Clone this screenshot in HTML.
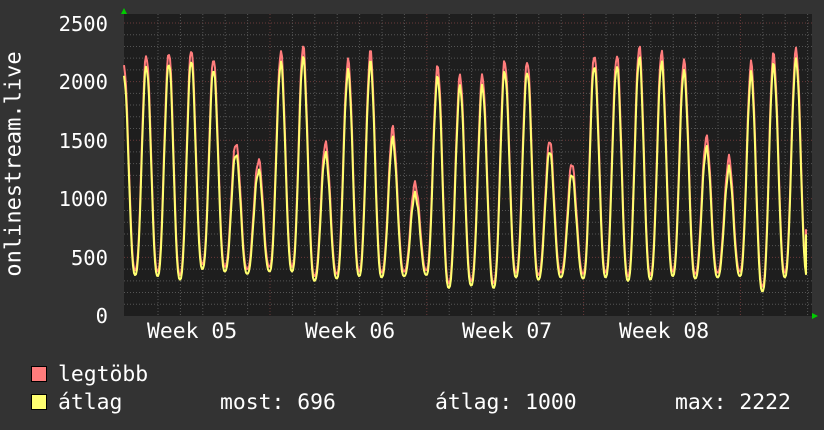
<!DOCTYPE html>
<html><head><meta charset="utf-8"><style>
html,body{margin:0;padding:0;background:#333;}
body{width:824px;height:430px;overflow:hidden;position:relative;font-family:"DejaVu Sans Mono","Liberation Mono",monospace;color:#fff;}
.t{position:absolute;font-size:21.4px;white-space:pre;line-height:1;}
.y{font-size:20.5px;}
.sq{position:absolute;width:14px;height:14px;border:1px solid #000;}
</style></head><body>
<svg id="g" width="824" height="430" style="position:absolute;left:0;top:0">
<rect x="124" y="14" width="688" height="302" fill="#1e1e1e"/>
<g id="grid"></g>
<path id="red" fill="none" stroke="#ff7c7c" stroke-width="2" stroke-linejoin="round"/>
<path id="yel" fill="none" stroke="#ffff70" stroke-width="2" stroke-linejoin="round"/>
<polygon points="121,14 127,14 124,8" fill="#00cc00"/>
<polygon points="812,313 812,319 818,316" fill="#00cc00"/>
<text x="14" y="164" transform="rotate(-90 14 164)" fill="#fff" font-size="22" text-anchor="middle" dominant-baseline="central" font-family="DejaVu Sans Mono,Liberation Mono,monospace">onlinestream.live</text>
</svg>
<div class="t y" style="right:716px;top:14px">2500</div>
<div class="t y" style="right:716px;top:72px">2000</div>
<div class="t y" style="right:716px;top:131px">1500</div>
<div class="t y" style="right:716px;top:189px">1000</div>
<div class="t y" style="right:716px;top:248px">500</div>
<div class="t y" style="right:716px;top:306px">0</div>
<div class="t" style="left:147px;top:321px">Week 05</div>
<div class="t" style="left:305px;top:321px">Week 06</div>
<div class="t" style="left:462px;top:321px">Week 07</div>
<div class="t" style="left:619px;top:321px">Week 08</div>
<div class="sq" style="left:31px;top:366px;background:#ff7c7c"></div>
<div class="sq" style="left:31px;top:394px;background:#ffff70"></div>
<div class="t" style="left:58px;top:364px">legtöbb</div>
<div class="t" style="left:58px;top:392px">átlag</div>
<div class="t" style="left:220px;top:392px">most: 696</div>
<div class="t" style="left:435px;top:392px">átlag: 1000</div>
<div class="t" style="left:675px;top:392px">max: 2222</div>
<script>
var L=124,R=812,T=14,B=316,k=0.11720;
function Y(v){return B-v*k;}
var g='';
for(var v=100;v<=2500;v+=100){var y=Y(v);var maj=(v%500==0);
g+='<line x1="'+L+'" x2="'+R+'" y1="'+y+'" y2="'+y+'" stroke="'+(maj?'#6a3a3a':'#555')+'" stroke-dasharray="1,2" stroke-width="1"/>';}
for(var d=0;d<31;d++){var x=158+22.4*d;if(x>R)break;var maj=((d-5)%7==0);
g+='<line x1="'+x+'" x2="'+x+'" y1="'+T+'" y2="'+B+'" stroke="'+(maj?'#6a3a3a':'#555')+'" stroke-dasharray="1,2" stroke-width="1"/>';}
document.getElementById('grid').innerHTML=g;
var pk=[2050,2150,2170,2170,2100,1400,1250,2150,2200,1400,2100,2150,1500,1050,2050,1950,1950,2100,2100,1400,1200,2150,2150,2200,2150,2100,1450,1250,2050,2150,2200,2000];
var mn=[350,340,310,400,380,360,380,380,300,320,340,330,340,350,240,260,240,330,310,330,320,330,300,310,340,320,330,340,210,330,340,350];
var ry='',rr='';
for(var x=L;x<=R-6;x+=1){var t=(x-L)/22.4;var i=Math.round(t);var f=t-i;
var p=pk[i],m=(f<0?mn[Math.max(i-1,0)]:mn[i]);
var s=Math.pow((1+Math.cos(2*Math.PI*f))/2,1.3);
var n=Math.sin(x*1.7)*25+Math.sin(x*0.63)*20;
var v=m+(p-m)*s+n*s;var vr=v+40+50*s;
ry+=(x==L?'M':'L')+x+' '+Y(v).toFixed(1);
rr+=(x==L?'M':'L')+x+' '+Y(vr).toFixed(1);}
var xe=R-6;ry+='L'+xe+' '+Y(696);rr+='L'+xe+' '+Y(740);
document.getElementById('yel').setAttribute('d',ry);
document.getElementById('red').setAttribute('d',rr);
</script>
</body></html>
